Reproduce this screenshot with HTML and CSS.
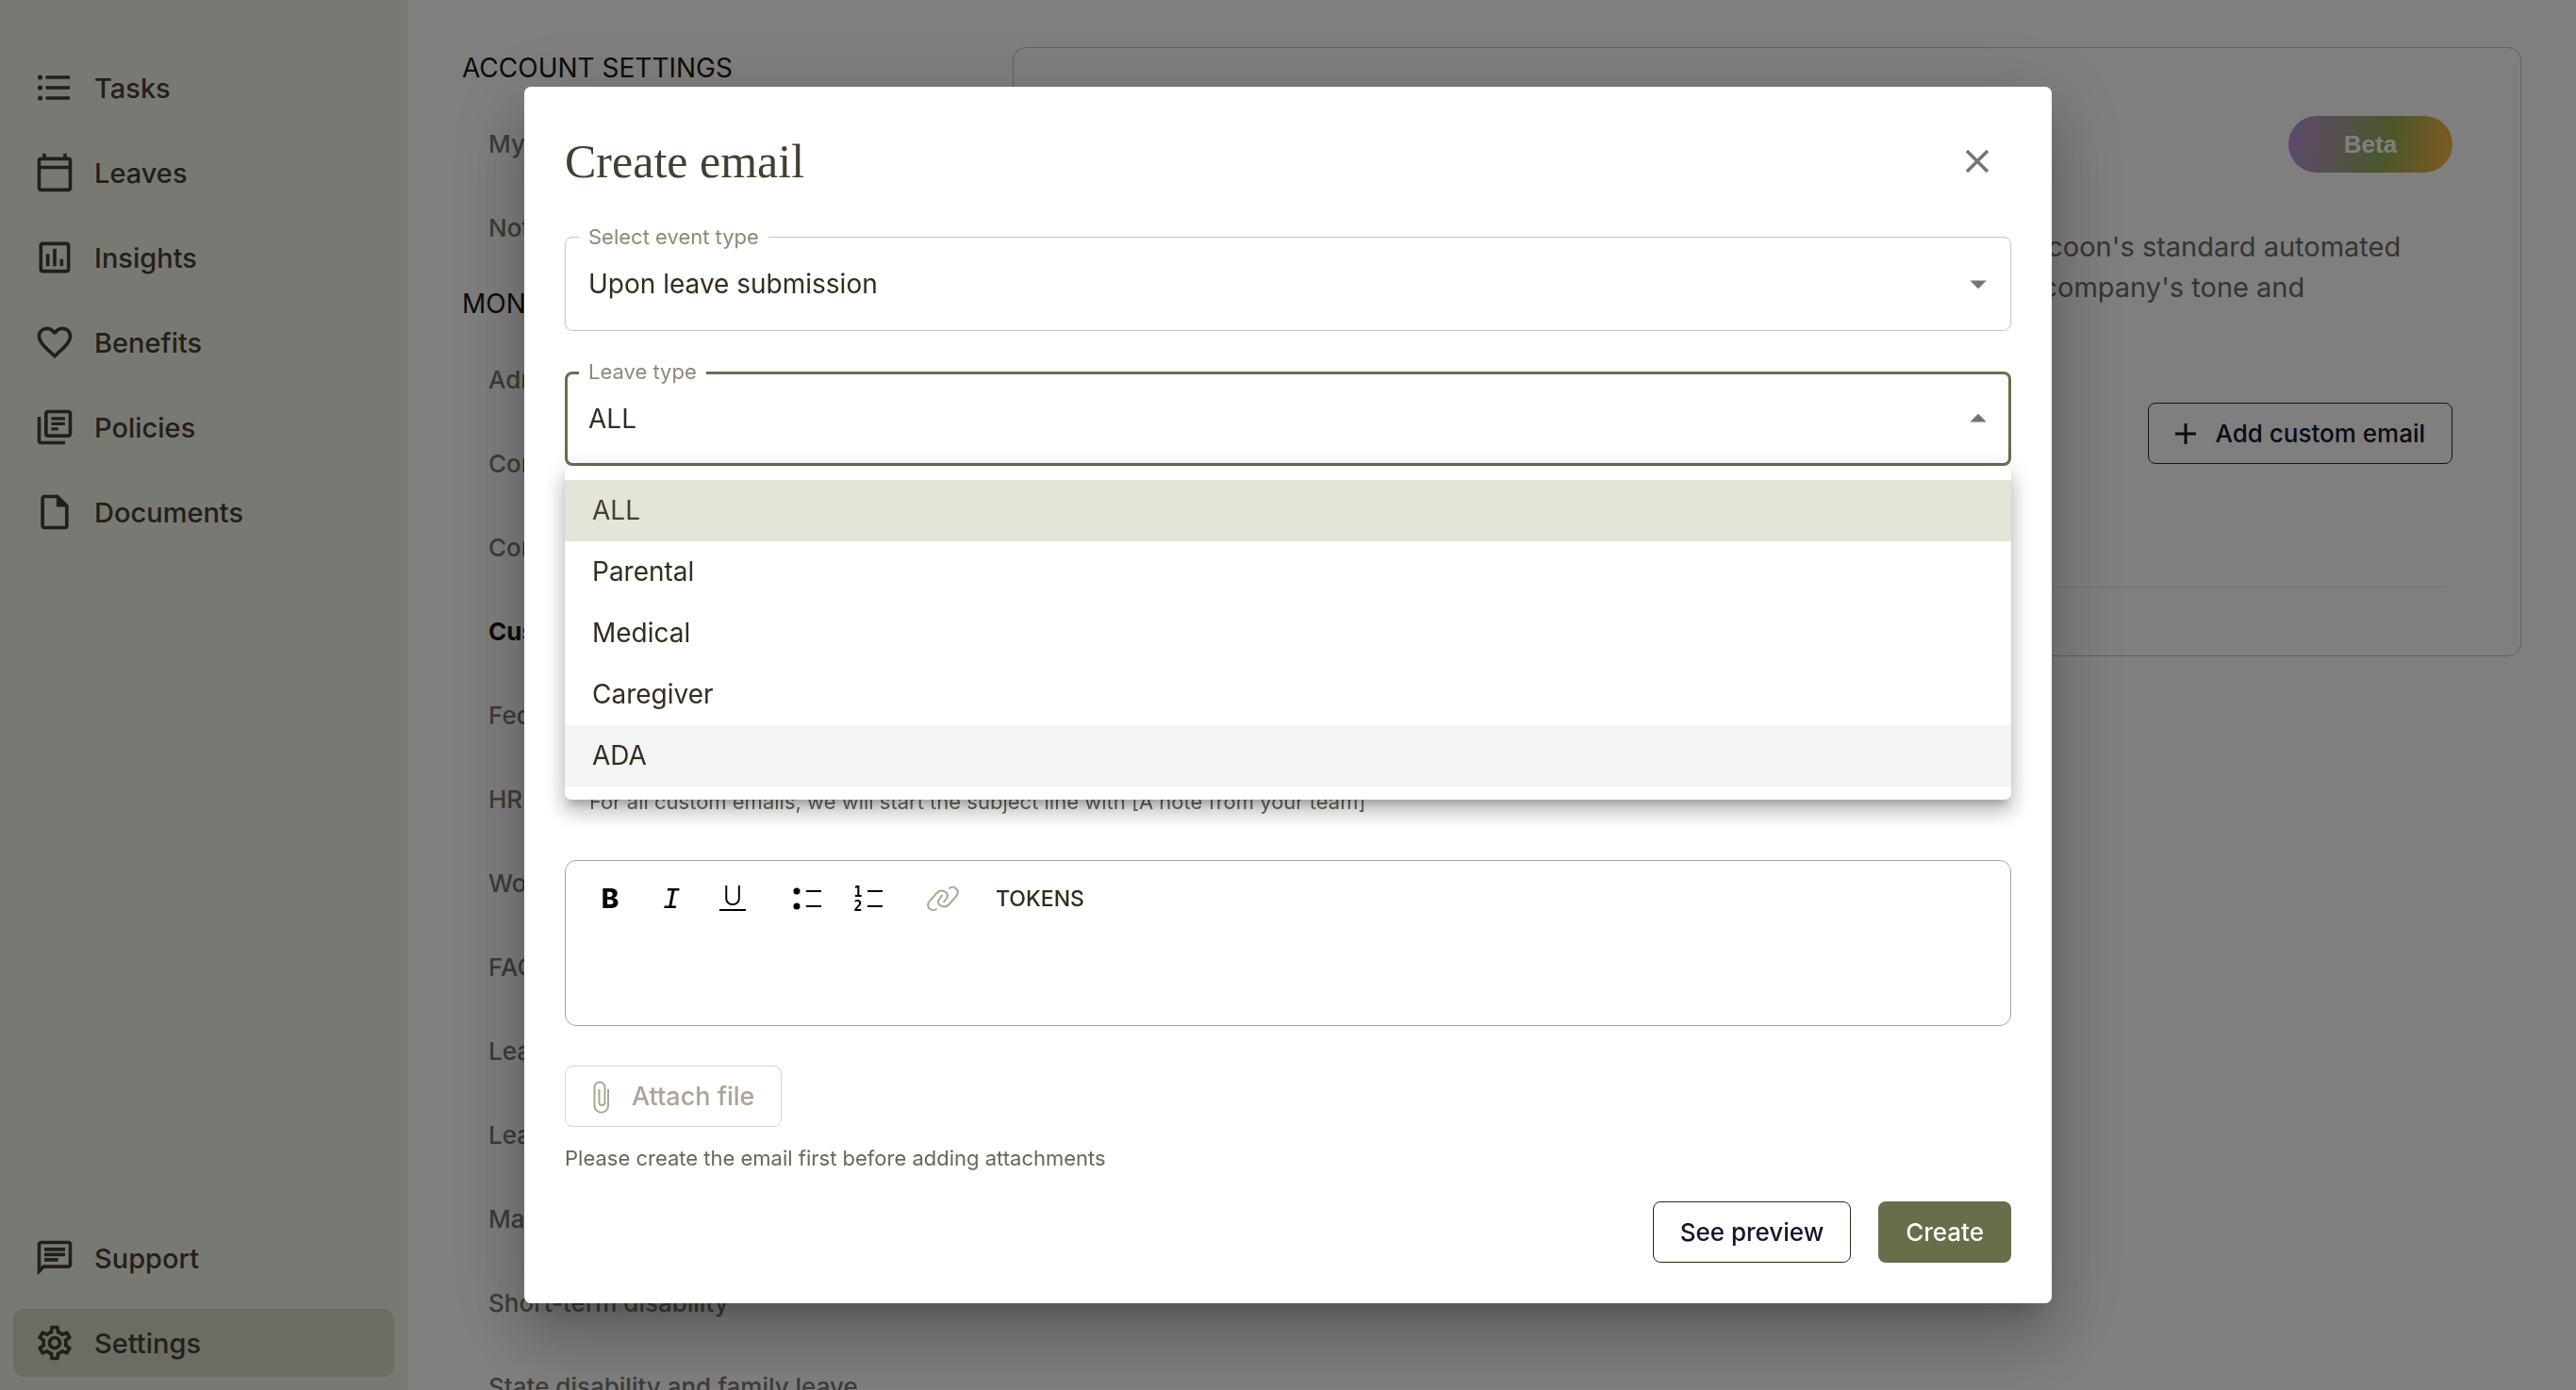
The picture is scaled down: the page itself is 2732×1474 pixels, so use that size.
FILE: index.html
```html
<!DOCTYPE html>
<html lang="en">
<head>
    <meta charset="UTF-8">
    <meta name="viewport" content="width=device-width, initial-scale=1.0">
    <title>Custom emails</title>
    <link rel="stylesheet" href="styles.css">
</head>
<body>

    <div class="app">
        <nav class="sidebar">
            <a href="#" class="side-link">
                <svg class="icon" viewBox="0 0 24 24"><circle cx="3.6" cy="6" r="1.4"/><circle cx="3.6" cy="12" r="1.4"/><circle cx="3.6" cy="18" r="1.4"/><path d="M6.8 5h14v2h-14zM6.8 11h14v2h-14zM6.8 17h14v2h-14z"/></svg>
                Tasks
            </a>
            <a href="#" class="side-link">
                <svg class="icon" viewBox="0 0 24 24"><path d="M20 3h-1V1h-2v2H7V1H5v2H4c-1.1 0-2 .9-2 2v16c0 1.1.9 2 2 2h16c1.1 0 2-.9 2-2V5c0-1.1-.9-2-2-2zm0 18H4V10h16v11zm0-13H4V5h16v3z"/></svg>
                Leaves
            </a>
            <a href="#" class="side-link">
                <svg class="icon" viewBox="0 0 24 24"><path d="M19 3H5c-1.1 0-2 .9-2 2v14c0 1.1.9 2 2 2h14c1.1 0 2-.9 2-2V5c0-1.1-.9-2-2-2zm0 16H5V5h14v14zM7 10h2v7H7zm4-3h2v10h-2zm4 6h2v4h-2z"/></svg>
                Insights
            </a>
            <a href="#" class="side-link">
                <svg class="icon" viewBox="0 0 24 24"><path d="M16.5 3c-1.74 0-3.41.81-4.5 2.09C10.91 3.81 9.24 3 7.5 3 4.42 3 2 5.42 2 8.5c0 3.78 3.4 6.86 8.55 11.54L12 21.35l1.45-1.32C18.6 15.36 22 12.28 22 8.5 22 5.42 19.58 3 16.5 3zm-4.4 15.55l-.1.1-.1-.1C7.14 14.24 4 11.39 4 8.5 4 6.5 5.5 5 7.5 5c1.54 0 3.04.99 3.57 2.36h1.87C13.46 5.99 14.96 5 16.5 5c2 0 3.5 1.5 3.5 3.5 0 2.89-3.14 5.74-7.9 10.05z"/></svg>
                Benefits
            </a>
            <a href="#" class="side-link">
                <svg class="icon" viewBox="0 0 24 24"><path d="M4 6H2v14c0 1.1.9 2 2 2h14v-2H4V6zm16-4H8c-1.1 0-2 .9-2 2v12c0 1.1.9 2 2 2h12c1.1 0 2-.9 2-2V4c0-1.1-.9-2-2-2zm0 14H8V4h12v12zM10 9.200h8v1.700h-8zm0 3h4v1.700h-4zm0-6h8v1.700h-8z"/></svg>
                Policies
            </a>
            <a href="#" class="side-link">
                <svg class="icon" viewBox="0 0 24 24"><path d="M14 2H6c-1.1 0-2 .9-2 2v16c0 1.1.9 2 2 2h12c1.1 0 2-.9 2-2V8l-6-6zM6 20V4h7v5h5v11H6z"/></svg>
                Documents
            </a>
            <div class="side-bottom">
                <a href="#" class="side-link">
                    <svg class="icon" viewBox="0 0 24 24"><path d="M4 4h16v12H5.17L4 17.17V4m0-2c-1.1 0-1.99.9-1.99 2L2 22l4-4h14c1.1 0 2-.9 2-2V4c0-1.1-.9-2-2-2H4zm2 10h8v2H6v-2zm0-3h12v2H6V9zm0-3h12v2H6V6z"/></svg>
                    Support
                </a>
                <a href="#" class="side-link active">
                    <svg class="icon" viewBox="0 0 24 24"><path d="M19.43 12.98c.04-.32.07-.64.07-.98 0-.34-.03-.66-.07-.98l2.11-1.65c.19-.15.24-.42.12-.64l-2-3.46c-.09-.16-.26-.25-.44-.25-.06 0-.12.01-.17.03l-2.49 1c-.52-.4-1.08-.73-1.69-.98l-.38-2.65C14.46 2.18 14.25 2 14 2h-4c-.25 0-.46.18-.49.42l-.38 2.65c-.61.25-1.17.59-1.69.98l-2.49-1c-.06-.02-.12-.03-.18-.03-.17 0-.34.09-.43.25l-2 3.46c-.13.22-.07.49.12.64l2.11 1.65c-.04.32-.07.65-.07.98 0 .33.03.66.07.98l-2.11 1.65c-.19.15-.24.42-.12.64l2 3.46c.09.16.26.25.44.25.06 0 .12-.01.17-.03l2.49-1c.52.4 1.08.73 1.69.98l.38 2.65c.03.24.24.42.49.42h4c.25 0 .46-.18.49-.42l.38-2.65c.61-.25 1.17-.59 1.69-.98l2.49 1c.06.02.12.03.18.03.17 0 .34-.09.43-.25l2-3.46c.12-.22.07-.49-.12-.64l-2.11-1.65zm-1.98-1.71c.04.31.05.52.05.73 0 .21-.02.43-.05.73l-.14 1.13.89.7 1.08.84-.7 1.21-1.27-.51-1.04-.42-.9.68c-.43.32-.84.56-1.25.73l-1.06.43-.16 1.13-.2 1.35h-1.4l-.19-1.35-.16-1.13-1.06-.43c-.43-.18-.83-.41-1.23-.71l-.91-.7-1.06.43-1.27.51-.7-1.21 1.08-.84.89-.7-.14-1.13c-.03-.31-.05-.54-.05-.74s.02-.43.05-.73l.14-1.13-.89-.7-1.08-.84.7-1.21 1.27.51 1.04.42.9-.68c.43-.32.84-.56 1.25-.73l1.06-.43.16-1.13.2-1.35h1.39l.19 1.35.16 1.13 1.06.43c.43.18.83.41 1.23.71l.91.7 1.06-.43 1.27-.51.7 1.21-1.07.85-.89.7.14 1.13zM12 8c-2.21 0-4 1.79-4 4s1.79 4 4 4 4-1.79 4-4-1.79-4-4-4zm0 6c-1.1 0-2-.9-2-2s.9-2 2-2 2 .9 2 2-.9 2-2 2z"/></svg>
                    Settings
                </a>
            </div>
        </nav>

        <nav class="settings-nav">
            <h2>ACCOUNT SETTINGS</h2>
            <a href="#">My profile</a>
            <a href="#">Notifications</a>
            <h2>MONARCH SETTINGS</h2>
            <a href="#">Admins</a>
            <a href="#">Company</a>
            <a href="#">Contacts</a>
            <a href="#" class="current">Custom emails</a>
            <a href="#">Federal leave</a>
            <a href="#">HR systems</a>
            <a href="#">Work locations</a>
            <a href="#">FAQs</a>
            <a href="#">Leave policies</a>
            <a href="#">Leave reasons</a>
            <a href="#">Managers</a>
            <a href="#">Short-term disability</a>
            <a href="#">State disability and family leave</a>
        </nav>

        <main class="content">
            <section class="card">
                <div class="card-top">
                    <span class="beta">Beta</span>
                </div>
                <p class="intro">Custom emails are sent to your employees during their leave, alongside Cocoon's standard automated<br>emails. Use them to send extra details with your team, written in your own company's tone and<br>voice.</p>
                <div class="card-actions">
                    <button class="btn outline">
                        <svg class="plus" viewBox="0 0 22 22"><path d="M11 0v22M0 11h22"/></svg>
                        Add custom email
                    </button>
                </div>
                <hr>
            </section>
        </main>
    </div>

    <div class="backdrop">
        <div class="modal" role="dialog" aria-labelledby="modalTitle">
            <div class="modal-head">
                <h1 id="modalTitle">Create email</h1>
                <button class="close" aria-label="Close">
                    <svg class="icon-sm" viewBox="0 0 24 24"><path d="M19 6.41L17.59 5 12 10.59 6.41 5 5 6.41 10.59 12 5 17.59 6.41 19 12 13.41 17.59 19 19 17.59 13.41 12z"/></svg>
                </button>
            </div>

            <div class="field">
                <label for="eventType">Select event type</label>
                <select id="eventType">
                    <option>Upon leave submission</option>
                </select>
                <svg class="icon-sm arrow" viewBox="0 0 24 24"><path d="M7 10l5 5 5-5z"/></svg>
            </div>

            <div class="field focused">
                <label for="leaveType">Leave type</label>
                <select id="leaveType">
                    <option>ALL</option>
                    <option>Parental</option>
                    <option>Medical</option>
                    <option>Caregiver</option>
                    <option>ADA</option>
                </select>
                <svg class="icon-sm arrow" viewBox="0 0 24 24"><path d="M7 14l5-5 5 5z"/></svg>
                <ul class="menu" role="listbox">
                    <li class="selected" role="option">ALL</li>
                    <li role="option">Parental</li>
                    <li role="option">Medical</li>
                    <li role="option">Caregiver</li>
                    <li class="hover" role="option">ADA</li>
                </ul>
            </div>

            <div class="field">
                <input type="text" aria-label="Name">
            </div>

            <div class="field subject">
                <input type="text" aria-label="Subject">
            </div>
            <p class="helper">For all custom emails, we will start the subject line with [A note from your team]</p>

            <div class="editor">
                <div class="toolbar">
                    <button aria-label="Bold"><svg viewBox="0 0 36 36"><text x="18" y="28" class="bold">B</text></svg></button>
                    <button aria-label="Italic"><svg viewBox="0 0 36 36"><text x="18" y="28" class="italic">I</text></svg></button>
                    <button aria-label="Underline"><svg viewBox="0 0 36 36"><text x="18" y="25" class="under">U</text><path d="M4 30h28"/></svg></button>
                    <button aria-label="Bulleted list" class="spaced"><svg viewBox="0 0 36 36"><path d="M17 10h16M17 26h16"/><circle cx="7" cy="10" r="3.5"/><circle cx="7" cy="26" r="3.5"/></svg></button>
                    <button aria-label="Numbered list"><svg viewBox="0 0 36 36"><path d="M17 10h16M17 26h16"/><text x="7" y="16" class="digit">1</text><text x="7" y="31" class="digit">2</text></svg></button>
                    <button aria-label="Link" class="spaced" disabled><svg viewBox="0 0 36 36"><path d="M11.5 28.5C8 33-1 28 3.5 21L11 12.500C16 6.500 26 11 22 17.500L18.500 22M24.500 7.500C28 3 37 8 32.500 15L25 23.500C20 29.500 10 25 14 18.500L17.500 14"/></svg></button>
                    <button class="tokens">TOKENS</button>
                </div>
                <div class="editor-body" contenteditable="true"></div>
            </div>

            <button class="btn attach" disabled>
                <svg class="clip" viewBox="0 0 20 36"><path d="M17 10v17.500a7.250 7.250 0 0 1-14.500 0V8a5.500 5.500 0 0 1 11 0v16a3 3 0 0 1-6 0V10"/></svg>
                Attach file
            </button>
            <p class="note">Please create the email first before adding attachments</p>

            <div class="modal-foot">
                <button class="btn outline">See preview</button>
                <button class="btn primary">Create</button>
            </div>
        </div>
    </div>

</body>
</html>
```
FILE: styles.css
```css
* {
    box-sizing: border-box;
}
body {
    margin: 0;
    font-family: Inter, "Liberation Sans", sans-serif;
    font-size: 28px;
    color: #332d20;
    background: white;
}
h1, h2, p, ul {
    margin: 0;
    padding: 0;
}
button, input, select {
    font-family: inherit;
    color: inherit;
}
a {
    color: inherit;
    text-decoration: none;
}
.app {
    display: flex;
    height: 100vh;
    overflow: hidden;
}

/* left sidebar */
.sidebar {
    width: 432px;
    flex-shrink: 0;
    display: flex;
    flex-direction: column;
    gap: 18px;
    padding: 57px 14px 14px;
    background: #f3f3e8;
}
.side-link {
    display: flex;
    align-items: center;
    gap: 20px;
    height: 72px;
    padding: 0 22px;
    border-radius: 12px;
    font-size: 29px;
    font-weight: 500;
    color: #443f37;
}
.side-link.active {
    background: #d7d9c5;
}
.side-bottom {
    margin-top: auto;
    display: flex;
    flex-direction: column;
    gap: 18px;
}
.icon {
    width: 44px;
    height: 44px;
    fill: currentColor;
}
.icon-sm {
    width: 42px;
    height: 42px;
    fill: #757575;
}

/* settings list */
.settings-nav {
    width: 642px;
    flex-shrink: 0;
    padding: 36px 58px 0;
}
.settings-nav h2 {
    font-size: 28px;
    font-weight: 400;
    line-height: 72px;
    color: #1c170a;
}
.settings-nav a {
    display: block;
    padding-left: 28px;
    font-size: 26px;
    font-weight: 500;
    line-height: 89px;
    color: #7d786d;
    white-space: nowrap;
}
.settings-nav .current {
    font-weight: 700;
    color: #1c170a;
}

/* main card */
.content {
    flex: 1;
    padding: 50px 58px 0 0;
}
.card {
    height: 646px;
    padding: 72px;
    border: 1px solid #c4c2ba;
    border-radius: 14px;
}
.card-top, .card-actions, .modal-foot {
    display: flex;
    justify-content: flex-end;
}
.beta {
    width: 174px;
    border-radius: 30px;
    text-align: center;
    font: bold 26px/60px "Liberation Sans", sans-serif;
    color: white;
    background: linear-gradient(100deg, #c090e0, #94ac58 58%, #ffb444);
}
.intro {
    margin-top: 57px;
    font-size: 29px;
    line-height: 43px;
    color: #6c6a66;
    white-space: nowrap;
}
.card-actions {
    margin-top: 58px;
}
.card hr {
    margin: 130px 8px 0;
    border: 0;
    border-top: 1px solid #dedede;
}
.btn {
    display: flex;
    align-items: center;
    height: 65px;
    padding: 0 28px;
    border: 1px solid transparent;
    border-radius: 8px;
    background: none;
    font-size: 26px;
    font-weight: 500;
}
.btn.outline {
    border-color: #2a2914;
    color: #16142b;
}
.btn.primary {
    background: #696d4a;
    color: white;
}
.plus {
    width: 22px;
    height: 22px;
    margin-right: 20px;
    fill: none;
    stroke: currentColor;
    stroke-width: 3;
}

/* dialog */
.backdrop {
    position: fixed;
    inset: 0;
    display: flex;
    align-items: center;
    justify-content: center;
    background: rgba(0, 0, 0, 0.5);
}
.modal {
    width: 1620px;
    max-width: 100%;
    padding: 43px;
    border-radius: 7px;
    background: white;
    box-shadow: 0 20px 27px -12px rgba(0, 0, 0, 0.2),
                0 43px 68px 5px rgba(0, 0, 0, 0.14),
                0 16px 82px 14px rgba(0, 0, 0, 0.12);
}
.modal-head {
    display: flex;
    align-items: center;
    justify-content: space-between;
    height: 72px;
    margin-bottom: 44px;
}
.modal-head h1 {
    font: 400 50px/72px "Liberation Serif", serif;
    color: #453f33;
}
.close {
    display: flex;
    padding: 15px;
    border: 0;
    background: none;
}
.field {
    position: relative;
    height: 100px;
    margin-bottom: 43px;
}
.field label {
    position: absolute;
    top: -12px;
    left: 15px;
    padding: 0 10px;
    background: white;
    font-size: 22px;
    line-height: 24px;
    color: #8f8879;
}
.field select, .field input {
    appearance: none;
    width: 100%;
    height: 100px;
    padding: 0 24px;
    border: 1px solid #c4c4c4;
    border-radius: 8px;
    background: none;
    font-size: 28px;
}
.field.focused select {
    padding: 0 22px;
    border: 3px solid #696d4a;
    outline: none;
}
.arrow {
    position: absolute;
    top: 29px;
    right: 14px;
    pointer-events: none;
}
.menu {
    position: absolute;
    z-index: 1;
    top: 101px;
    left: 0;
    right: 0;
    padding: 14px 0;
    border-radius: 7px;
    background: white;
    list-style: none;
    box-shadow: 0 9px 9px -5px rgba(0, 0, 0, 0.2),
                0 14px 18px 2px rgba(0, 0, 0, 0.14),
                0 5px 25px 4px rgba(0, 0, 0, 0.12);
}
.menu li {
    padding: 0 29px;
    line-height: 65px;
}
.menu .selected {
    background: #e4e4d8;
    color: #453f33;
}
.menu .hover {
    background: #f4f4f4;
}
.field.subject {
    margin-bottom: 52px;
}
.helper, .note {
    font-size: 22px;
    line-height: 36px;
    color: #6b6558;
}
.helper {
    padding: 0 26px;
    margin-bottom: 44px;
}
.editor {
    height: 176px;
    border: 1px solid #aaa595;
    border-radius: 12px;
    margin-bottom: 42px;
}
.toolbar {
    display: flex;
    align-items: center;
    gap: 29px;
    padding: 22px 29px 0;
}
.toolbar button {
    display: flex;
    padding: 0;
    border: 0;
    background: none;
    color: black;
}
.toolbar button:disabled {
    color: #aca596;
}
.toolbar .spaced {
    margin-left: 14px;
}
.toolbar svg {
    width: 36px;
    height: 36px;
    fill: currentColor;
}
.toolbar path {
    fill: none;
    stroke: currentColor;
    stroke-width: 2;
}
.toolbar text {
    font-size: 28px;
    text-anchor: middle;
}
.toolbar .bold {
    font-weight: 800;
}
.toolbar .italic {
    font: italic 31px "Liberation Mono", monospace;
}
.toolbar .under {
    font-weight: 300;
}
.toolbar .digit {
    font: bold 15px "DejaVu Sans Mono", monospace;
}
.toolbar .tokens {
    padding: 0 9px;
    font-size: 23px;
    font-weight: 500;
    color: #332d20;
}
.attach {
    border-color: #d6d4cc;
    font-size: 27px;
    color: #aca596;
}
.clip {
    width: 20px;
    height: 36px;
    margin-right: 22px;
    fill: none;
    stroke: currentColor;
    stroke-width: 2;
}
.note {
    margin: 15px 0 28px;
}
.modal-foot {
    gap: 29px;
}
```
